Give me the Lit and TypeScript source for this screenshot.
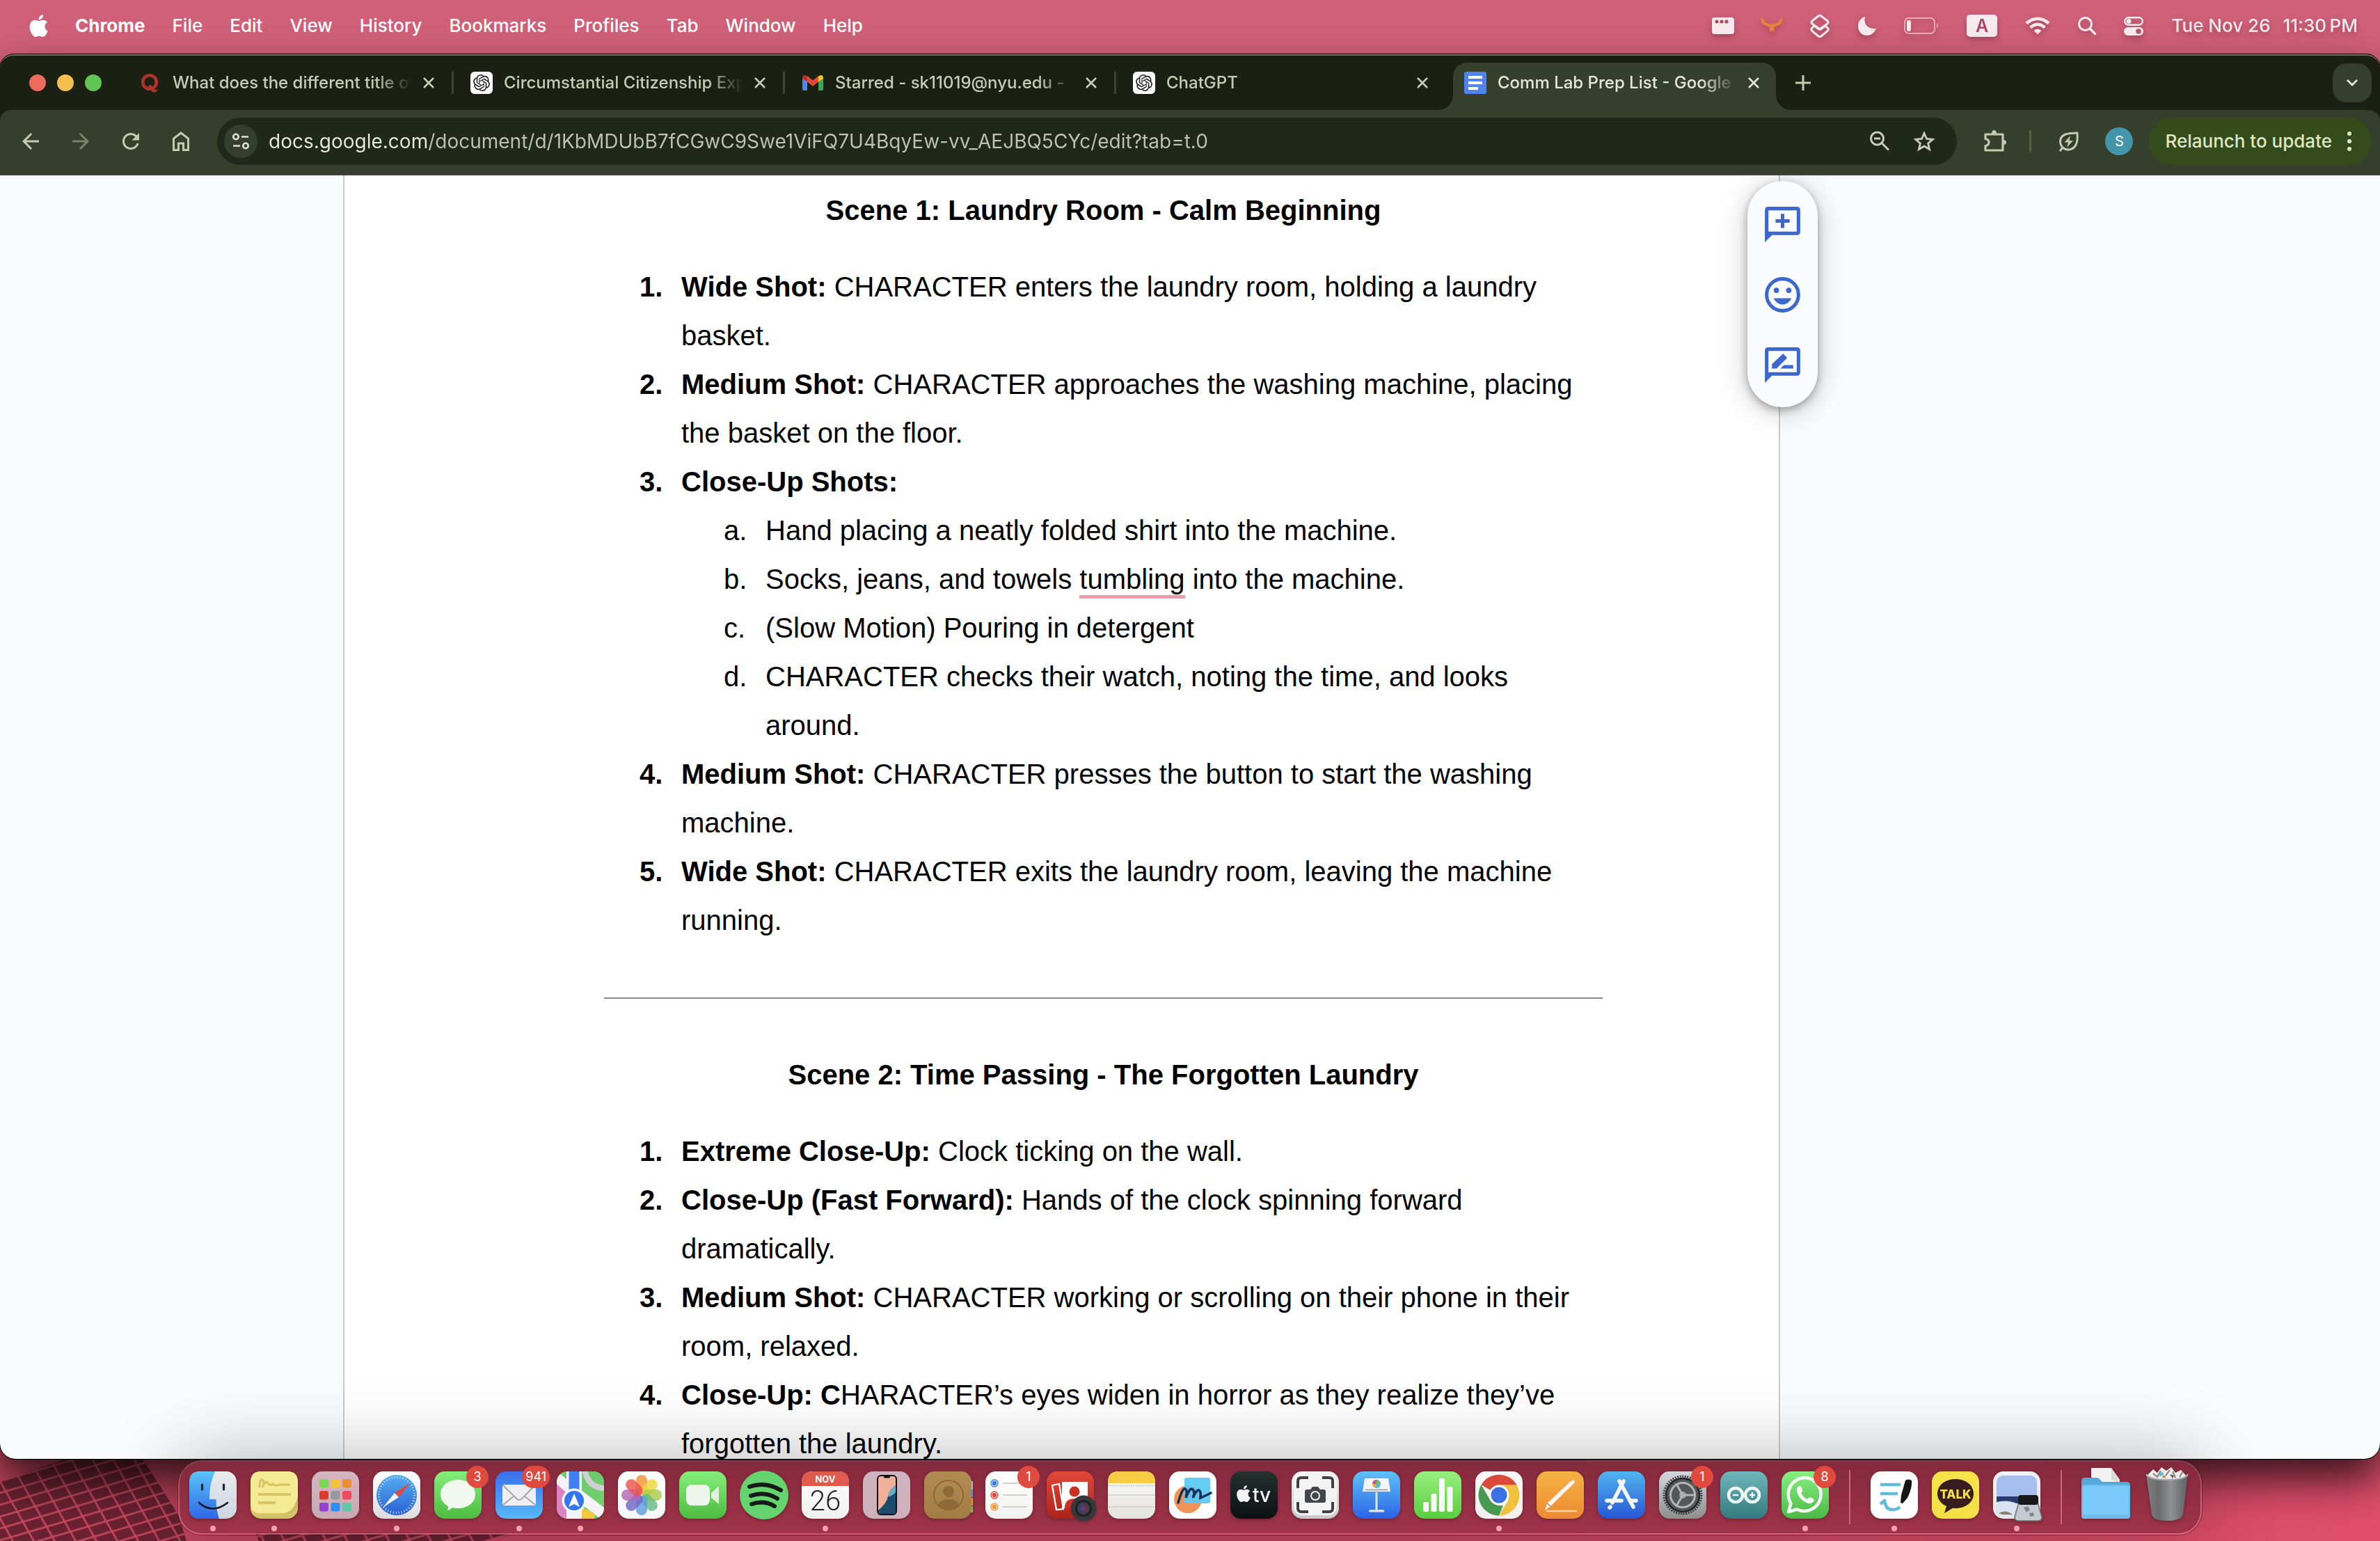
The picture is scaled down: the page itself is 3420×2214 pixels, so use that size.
import { LitElement, html, svg, css, nothing } from "lit";
import { customElement, state } from "lit/decorators.js";
import { classMap } from "lit/directives/class-map.js";

const APPLE =
  "M12.152 6.896c-.948 0-2.415-1.078-3.96-1.04-2.04.027-3.91 1.183-4.961 3.014-2.117 3.675-.546 9.103 1.519 12.09 1.013 1.454 2.208 3.09 3.792 3.039 1.52-.065 2.09-.987 3.935-.987 1.831 0 2.35.987 3.96.948 1.637-.026 2.676-1.48 3.676-2.948 1.156-1.688 1.636-3.325 1.662-3.415-.039-.013-3.182-1.221-3.22-4.857-.026-3.04 2.48-4.494 2.597-4.559-1.429-2.09-3.623-2.324-4.39-2.376-2-.156-3.675 1.09-4.61 1.09zM15.53 3.83c.843-1.012 1.4-2.427 1.245-3.83-1.207.052-2.662.805-3.532 1.818-.78.896-1.454 2.338-1.273 3.714 1.338.104 2.715-.688 3.559-1.701";

const OPENAI =
  "M22.2819 9.8211a5.9847 5.9847 0 0 0-.5157-4.9108 6.0462 6.0462 0 0 0-6.5098-2.9A6.0651 6.0651 0 0 0 4.9807 4.1818a5.9847 5.9847 0 0 0-3.9977 2.9 6.0462 6.0462 0 0 0 .7427 7.0966 5.98 5.98 0 0 0 .511 4.9107 6.051 6.051 0 0 0 6.5146 2.9001A5.9847 5.9847 0 0 0 13.2599 24a6.0557 6.0557 0 0 0 5.7718-4.2058 5.9894 5.9894 0 0 0 3.9977-2.9001 6.0557 6.0557 0 0 0-.7475-7.0729zm-9.022 12.6081a4.4755 4.4755 0 0 1-2.8764-1.0408l.1419-.0804 4.7783-2.7582a.7948.7948 0 0 0 .3927-.6813v-6.7369l2.02 1.1686a.071.071 0 0 1 .038.052v5.5826a4.504 4.504 0 0 1-4.4945 4.4944zm-9.6607-4.1254a4.4708 4.4708 0 0 1-.5346-3.0137l.142.0852 4.783 2.7582a.7712.7712 0 0 0 .7806 0l5.8428-3.3685v2.3324a.0804.0804 0 0 1-.0332.0615L9.74 19.9502a4.4992 4.4992 0 0 1-6.1408-1.6464zM2.3408 7.8956a4.485 4.485 0 0 1 2.3655-1.9728V11.6a.7664.7664 0 0 0 .3879.6765l5.8144 3.3543-2.0201 1.1685a.0757.0757 0 0 1-.071 0l-4.8303-2.7865A4.504 4.504 0 0 1 2.3408 7.872zm16.5963 3.8558L13.1038 8.364 15.1192 7.2a.0757.0757 0 0 1 .071 0l4.8303 2.7913a4.4944 4.4944 0 0 1-.6765 8.1042v-5.6772a.79.79 0 0 0-.407-.667zm2.0107-3.0231l-.142-.0852-4.7735-2.7818a.7759.7759 0 0 0-.7854 0L9.409 9.2297V6.8974a.0662.0662 0 0 1 .0284-.0615l4.8303-2.7866a4.4992 4.4992 0 0 1 6.6802 4.66zM8.3065 12.863l-2.02-1.1638a.0804.0804 0 0 1-.038-.0567V6.0742a4.4992 4.4992 0 0 1 7.3757-3.4537l-.142.0805L8.704 5.459a.7948.7948 0 0 0-.3927.6813zm1.0976-2.3654l2.602-1.4998 2.6069 1.4998v2.9994l-2.5974 1.4997-2.6067-1.4997Z";

const resetStyles = css`
  :host {
    display: block;
    font-family: Inter, "Liberation Sans", sans-serif;
  }
  *,
  *::before,
  *::after {
    box-sizing: border-box;
  }
  button {
    margin: 0;
    padding: 0;
    border: 0;
    background: none;
    color: inherit;
    font: inherit;
    text-align: left;
    cursor: default;
  }
  svg {
    display: block;
    flex: none;
    overflow: visible;
  }
`;

/* ---------- menu bar ---------- */

@customElement("mac-menu-bar")
export class MacMenuBar extends LitElement {
  static styles = [
    resetStyles,
    css`
      .bar {
        display: flex;
        align-items: center;
        justify-content: space-between;
        height: 76px;
        padding: 0 32px 2px 41px;
        background: #cf6077;
        color: #fff;
        font-size: 26px;
        line-height: 32px;
        font-weight: 500;
      }
      .menus,
      .status {
        display: flex;
        align-items: center;
        white-space: nowrap;
      }
      .menus {
        gap: 39px;
      }
      .status {
        gap: 40px;
        color: #f8eaee;
        filter: drop-shadow(0 4px 4px rgba(90, 20, 40, 0.35));
      }
      .app {
        font-weight: 700;
      }
      .clock {
        display: flex;
        gap: 18px;
      }
    `,
  ];

  render() {
    const menus = ["File", "Edit", "View", "History", "Bookmarks", "Profiles", "Tab", "Window", "Help"];
    return html`
      <header class="bar">
        <nav class="menus" aria-label="Application menu">
          <button aria-label="Apple menu">
            <svg width="28" height="32" viewBox="1 0 21 24" fill="#fff"><path d=${APPLE} /></svg>
          </button>
          <button class="app">Chrome</button>
          ${menus.map((m) => html`<button>${m}</button>`)}
        </nav>
        <div class="status">
          <svg width="32" height="24" viewBox="0 0 32 24">
            <rect width="32" height="24" rx="4" fill="#f8eaee" />
            <g fill="#b04a62"><circle cx="7" cy="6" r="2.6" /><circle cx="14" cy="6" r="2.6" /><circle cx="21" cy="6" r="2.6" /></g>
          </svg>
          <svg width="28" height="22" viewBox="0 0 28 22">
            <path d="M-1 1l5 6M29 1l-5 6" stroke="#e8843a" stroke-width="3" />
            <path d="M0 5Q14 17 28 5" fill="none" stroke="#e8843a" stroke-width="4" />
            <circle cx="14" cy="16" r="3.4" fill="#e8843a" />
            <path d="M14 18v4" stroke="#b9664a" stroke-width="2" />
          </svg>
          <svg width="30" height="32" viewBox="0 0 30 32" fill="none" stroke="#f8eaee" stroke-width="3" stroke-linejoin="round">
            <path d="M13 2Q15 .5 17 2L26 9Q28 11 26 13L17 19.500Q15 21 13 19.500L4 13Q2 11 4 9Z" />
            <path d="M7 16L3.500 19.500Q2 21.500 4 23.500L13 31Q15 32.500 17 31L26 23.500Q28 21.500 26.500 19.500L23 16L17 20.500Q15 22 13 20.500Z" />
          </svg>
          <svg width="26" height="27" viewBox="0 0 26 27">
            <path d="M10 0C8 9 12 18 26 17C23 24 18 27 12.500 27C5 27 0 21 0 13.500C0 7 4 1.500 10 0Z" fill="#f8eaee" />
          </svg>
          <svg width="50" height="24" viewBox="0 0 50 24">
            <rect x="1" y="1" width="43" height="22" rx="6" fill="none" stroke="#e9a9b6" stroke-width="2" />
            <rect x="4" y="4" width="6" height="16" rx="3" fill="#f8eaee" />
            <path d="M47 8q4 4 0 8z" fill="#e9a9b6" />
          </svg>
          <svg width="44" height="32" viewBox="0 0 44 32">
            <rect width="44" height="32" rx="5" fill="#f8eaee" />
            <text x="22" y="25" font-size="25" font-weight="600" text-anchor="middle" fill="#a84a60" font-family="Inter, sans-serif">A</text>
          </svg>
          <svg width="36" height="26" viewBox="0 0 36 26" fill="none" stroke="#f8eaee" stroke-width="4.500">
            <path d="M2 9.500Q18 -4 34 9.500" />
            <path d="M7.500 15.500Q18 6.500 28.500 15.500" />
            <path d="M18 25.500L12.500 20Q18 15.500 23.500 20Z" fill="#f8eaee" stroke="none" />
          </svg>
          <svg width="26" height="26" viewBox="0 0 26 26" fill="none" stroke="#f8eaee" stroke-width="3">
            <circle cx="10.500" cy="10.500" r="9" />
            <path d="M17 17L24.500 24.500" stroke-width="3.600" stroke-linecap="round" />
          </svg>
          <svg width="28" height="27" viewBox="0 0 28 27">
            <rect x="1.200" y="1.200" width="25.600" height="10.600" rx="5.300" fill="none" stroke="#f8eaee" stroke-width="2.400" />
            <circle cx="7" cy="6.500" r="3.500" fill="#f8eaee" />
            <rect y="15" width="28" height="12" rx="6" fill="#f8eaee" />
            <circle cx="21" cy="21" r="3.800" fill="#b5556b" />
          </svg>
          <div class="clock"><span>Tue Nov 26</span><span>11:30&#8239;PM</span></div>
        </div>
      </header>
    `;
  }
}

/* ---------- browser window ---------- */

interface Tab {
  title: string;
  icon: unknown;
}

const gptIcon = html`<svg width="32" height="32" viewBox="0 0 32 32">
  <rect width="32" height="32" rx="6" fill="#fff" />
  <path d=${OPENAI} transform="translate(4 4)" fill="#222" />
</svg>`;

const quoraIcon = html`<svg width="32" height="32" viewBox="0 0 32 32">
  <circle cx="15" cy="15" r="9.800" fill="none" stroke="#b0332b" stroke-width="4.600" />
  <path d="M14 19Q18 19 20 23Q22 27 26.500 25.500Q26 29.500 22 29.500Q18 29.500 16.500 26Q15.500 23 13 23Z" fill="#b0332b" />
</svg>`;

const gmailIcon = html`<svg width="32" height="32" viewBox="0 0 32 32">
  <path d="M1 9v16q0 2 2 2h5V13z" fill="#4c86f0" />
  <path d="M31 9v16q0 2-2 2h-5V13z" fill="#3ca55a" />
  <path d="M8 6l8 6.500L24 6v8.500l-8 6.500-8-6.500z" fill="#e4483b" />
  <path d="M1 9q0-4 3.500-4Q6 5 8 6.500v8L1 10z" fill="#bf3027" />
  <path d="M31 9q0-4-3.500-4Q26 5 24 6.500v8L31 10z" fill="#f6c02c" />
</svg>`;

const docsIcon = html`<svg width="32" height="32" viewBox="0 0 32 32">
  <rect width="32" height="32" rx="3" fill="#4f84ee" />
  <path d="M6 6h20v4H6zM6 14h20v4H6zM6 22h14v4H6z" fill="#fff" />
</svg>`;

const closeIcon = html`<svg width="16" height="16" viewBox="0 0 16 16" stroke="currentColor" stroke-width="2.600">
  <path d="M1 1L15 15M15 1L1 15" />
</svg>`;

@customElement("browser-window")
export class BrowserWindow extends LitElement {
  static styles = [
    resetStyles,
    css`
      :host {
        min-height: 0;
      }
      .window {
        display: flex;
        flex-direction: column;
        height: 100%;
        overflow: hidden;
        border-radius: 20px 20px 22px 22px;
        border-top: 2px solid #6a6d60;
        outline: 1px solid #000;
        background: #1b2112;
        box-shadow: 0 30px 60px rgba(0, 0, 0, 0.75);
      }
      .strip {
        display: flex;
        flex: none;
        align-items: stretch;
        height: 78px;
        padding-right: 12px;
        color: #c6cdb4;
        font-size: 24px;
        line-height: 32px;
        font-weight: 500;
      }
      .lights {
        display: flex;
        flex: none;
        align-items: center;
        gap: 16px;
        width: 176px;
        padding-left: 42px;
      }
      .light {
        width: 24px;
        height: 24px;
        border-radius: 50%;
      }
      .close-light {
        background: #ed6a5e;
      }
      .min-light {
        background: #f4bf4f;
      }
      .max-light {
        background: #61c554;
      }
      .tab {
        display: flex;
        flex: 0 1 476px;
        min-width: 0;
        align-items: center;
        gap: 16px;
        padding: 0 28px 0 24px;
        position: relative;
      }
      .tab.divided {
        background: linear-gradient(#3b4530, #3b4530) right center / 3px 32px no-repeat;
      }
      .title {
        flex: 1;
        min-width: 0;
        overflow: hidden;
        white-space: nowrap;
        mask-image: linear-gradient(90deg, #000 calc(100% - 52px), transparent);
      }
      .tab.active {
        color: #e4e8da;
      }
      .tab.active::before {
        content: "";
        position: absolute;
        inset: 10px 4px 0 8px;
        border-radius: 20px 20px 0 0;
        background: #363e2c;
      }
      .tab.active::after {
        content: "";
        position: absolute;
        left: -12px;
        right: -16px;
        bottom: 0;
        height: 20px;
        background:
          radial-gradient(circle at 0 0, transparent 19px, #363e2c 20px) left / 20px 20px no-repeat,
          radial-gradient(circle at 100% 0, transparent 19px, #363e2c 20px) right / 20px 20px no-repeat;
      }
      .tab > * {
        position: relative;
        z-index: 1;
      }
      .new-tab {
        align-self: center;
        margin-left: 24px;
      }
      .spacer {
        flex: 1;
      }
      .tab-menu {
        display: grid;
        place-items: center;
        align-self: center;
        width: 56px;
        height: 56px;
        border-radius: 20px;
        background: #363e2c;
        color: #e4e8da;
      }
      .toolbar {
        display: flex;
        flex: none;
        align-items: center;
        height: 94px;
        padding: 0 12px 2px 26px;
        border-radius: 16px 16px 0 0;
        border-bottom: 2px solid #45443c;
        background: #363e2c;
        color: #c2cab0;
      }
      .nav {
        display: flex;
        gap: 36px;
        margin-right: 34px;
      }
      .dim {
        color: #78806a;
      }
      .omnibox {
        display: flex;
        flex: 1;
        min-width: 0;
        align-items: center;
        height: 68px;
        padding: 0 29px 0 10px;
        border-radius: 34px;
        background: #202819;
        color: #c9cbc0;
      }
      .site {
        display: grid;
        place-items: center;
        width: 48px;
        height: 48px;
        border-radius: 50%;
        background: #363e2c;
        color: #dfe3d4;
      }
      .url {
        flex: 1;
        min-width: 0;
        height: 40px;
        margin-left: 16px;
        padding: 0;
        border: 0;
        outline: 0;
        font: 400 28px/40px Inter, "Liberation Sans", sans-serif;
        color: transparent;
        background: linear-gradient(90deg, #e8ebdf 228px, #bfc2b6 228px);
        background-clip: text;
      }
      .actions {
        display: flex;
        gap: 28px;
      }
      .extras {
        display: flex;
        align-items: center;
        margin-left: 36px;
      }
      .rule {
        width: 3px;
        height: 32px;
        margin: 0 38px 0 32px;
        border-radius: 2px;
        background: #55603f;
      }
      .avatar {
        display: grid;
        place-items: center;
        width: 40px;
        height: 40px;
        margin: 0 22px 0 36px;
        border-radius: 50%;
        background: #4395a9;
        color: #fff;
        font-size: 20px;
        line-height: 24px;
      }
      .relaunch {
        display: flex;
        align-items: center;
        gap: 22px;
        height: 68px;
        padding: 0 29px 0 24px;
        border-radius: 34px;
        background: #344c1c;
        color: #dbe8c6;
        font-size: 26px;
        line-height: 32px;
        font-weight: 500;
        white-space: nowrap;
      }
      shot-document {
        flex: 1;
      }
    `,
  ];

  private tabs: Tab[] = [
    { title: "What does the different title of", icon: quoraIcon },
    { title: "Circumstantial Citizenship Expl", icon: gptIcon },
    { title: "Starred - sk11019@nyu.edu -", icon: gmailIcon },
    { title: "ChatGPT", icon: gptIcon },
    { title: "Comm Lab Prep List - Google", icon: docsIcon },
  ];

  @state() private active = 4;

  render() {
    return html`
      <section class="window">
        <div class="strip">
          <div class="lights">
            <button class="light close-light" aria-label="Close window"></button>
            <button class="light min-light" aria-label="Minimise window"></button>
            <button class="light max-light" aria-label="Zoom window"></button>
          </div>
          ${this.tabs.map(
            (t, i) => html`
              <div
                class=${classMap({
                  tab: true,
                  active: i === this.active,
                  divided: i !== this.active && i !== this.active - 1,
                })}
              >
                ${t.icon}
                <button class="title" @click=${() => (this.active = i)}>${t.title}</button>
                <button aria-label="Close tab">${closeIcon}</button>
              </div>
            `
          )}
          <button class="new-tab" aria-label="New tab">
            <svg width="22" height="22" viewBox="0 0 22 22" stroke="currentColor" stroke-width="3"><path d="M11 0v22M0 11h22" /></svg>
          </button>
          <div class="spacer"></div>
          <button class="tab-menu" aria-label="Search tabs">
            <svg width="16" height="10" viewBox="0 0 16 10" fill="none" stroke="currentColor" stroke-width="2.800"><path d="M1 1l7 7 7-7" /></svg>
          </button>
        </div>

        <div class="toolbar">
          <div class="nav">
            <button aria-label="Back">
              <svg width="36" height="36" viewBox="0 0 24 24" fill="currentColor"><path d="M20 11H7.830l5.590-5.590L12 4l-8 8 8 8 1.410-1.410L7.830 13H20z" /></svg>
            </button>
            <button class="dim" aria-label="Forward">
              <svg width="36" height="36" viewBox="0 0 24 24" fill="currentColor"><path d="M4 11h12.170l-5.590-5.590L12 4l8 8-8 8-1.410-1.410L16.170 13H4z" /></svg>
            </button>
            <button aria-label="Reload">
              <svg width="36" height="36" viewBox="0 0 24 24" fill="currentColor"><path d="M17.650 6.350C16.200 4.900 14.210 4 12 4c-4.420 0-7.990 3.580-7.990 8s3.570 8 7.990 8c3.730 0 6.840-2.550 7.730-6h-2.080c-.82 2.330-3.040 4-5.650 4-3.310 0-6-2.690-6-6s2.690-6 6-6c1.660 0 3.140.69 4.220 1.780L13 11h7V4z" /></svg>
            </button>
            <button aria-label="Home">
              <svg width="36" height="36" viewBox="0 0 36 36" fill="none" stroke="currentColor" stroke-width="3"><path d="M7.500 30.500V14L18 6l10.500 8v16.500H21.500V21h-7v9.500z" /></svg>
            </button>
          </div>
          <div class="omnibox">
            <button class="site" aria-label="View site information">
              <svg width="26" height="26" viewBox="0 0 26 26" fill="none" stroke="currentColor" stroke-width="2.600">
                <circle cx="6" cy="6.500" r="3.700" /><path d="M14 6.500h10M2 19.500h10" /><circle cx="20" cy="19.500" r="3.700" />
              </svg>
            </button>
            <input
              class="url"
              type="text"
              aria-label="Address"
              .value=${"docs.google.com/document/d/1KbMDUbB7fCGwC9Swe1ViFQ7U4BqyEw-vv_AEJBQ5CYc/edit?tab=t.0"}
            />
            <div class="actions">
              <button aria-label="Zoom out">
                <svg width="36" height="36" viewBox="0 0 36 36" fill="none" stroke="currentColor" stroke-width="3">
                  <circle cx="14.500" cy="14" r="9" /><path d="M10 14h9M21 20.500L31 30.500" />
                </svg>
              </button>
              <button aria-label="Bookmark this tab">
                <svg width="36" height="36" viewBox="0 0 36 36" fill="none" stroke="currentColor" stroke-width="2.800">
                  <path d="M18 6.500l3.500 8 8.700.800-6.600 5.700 2 8.500L18 25l-7.600 4.500 2-8.500-6.600-5.700 8.700-.800z" />
                </svg>
              </button>
            </div>
          </div>
          <div class="extras">
            <button aria-label="Extensions">
              <svg width="36" height="36" viewBox="0 0 36 36" fill="none" stroke="currentColor" stroke-width="3.200" stroke-linejoin="round">
                <path d="M5 8h25v23H5v-6.500q5-1 5-5t-5-5z" />
                <path d="M14 7q0-5 3.500-5T21 7zM31 16q4 0 4 3.500T31 23z" fill="currentColor" stroke="none" />
              </svg>
            </button>
            <div class="rule"></div>
            <button aria-label="Energy saver">
              <svg width="32" height="32" viewBox="0 0 32 32" fill="none" stroke="currentColor" stroke-width="3">
                <path d="M7 25C1 18 3 9 11 6Q17 4 28 4Q29 15 26 21C22 29 13 30 7 25L3 30" />
                <path d="M18 8L9.500 17.500h5.500L13 25l9-10h-5.500z" fill="currentColor" stroke="none" />
              </svg>
            </button>
            <button class="avatar" aria-label="Profile">S</button>
            <button class="relaunch">
              Relaunch to update
              <svg width="6" height="28" viewBox="0 0 6 28" fill="currentColor"><circle cx="3" cy="3" r="3" /><circle cx="3" cy="14" r="3" /><circle cx="3" cy="25" r="3" /></svg>
            </button>
          </div>
        </div>

        <shot-document></shot-document>
      </section>
    `;
  }
}

/* ---------- document ---------- */

interface Shot {
  label?: string;
  text?: unknown;
  steps?: unknown[];
}

interface Scene {
  title: string;
  shots: Shot[];
}

const scenes: Scene[] = [
  {
    title: "Scene 1: Laundry Room - Calm Beginning",
    shots: [
      { label: "Wide Shot:", text: "CHARACTER enters the laundry room, holding a laundry basket." },
      { label: "Medium Shot:", text: "CHARACTER approaches the washing machine, placing the basket on the floor." },
      {
        label: "Close-Up Shots:",
        steps: [
          "Hand placing a neatly folded shirt into the machine.",
          html`Socks, jeans, and towels <span class="flagged">tumbling</span> into the machine.`,
          "(Slow Motion) Pouring in detergent",
          "CHARACTER checks their watch, noting the time, and looks around.",
        ],
      },
      { label: "Medium Shot:", text: "CHARACTER presses the button to start the washing machine." },
      { label: "Wide Shot:", text: "CHARACTER exits the laundry room, leaving the machine running." },
    ],
  },
  {
    title: "Scene 2: Time Passing - The Forgotten Laundry",
    shots: [
      { label: "Extreme Close-Up:", text: "Clock ticking on the wall." },
      { label: "Close-Up (Fast Forward):", text: "Hands of the clock spinning forward dramatically." },
      { label: "Medium Shot:", text: "CHARACTER working or scrolling on their phone in their room, relaxed." },
      { label: "Close-Up:", text: html`<b>C</b>HARACTER’s eyes widen in horror as they realize they’ve forgotten the laundry.` },
    ],
  },
];

@customElement("shot-document")
export class ShotDocument extends LitElement {
  static styles = [
    resetStyles,
    css`
      :host {
        min-height: 0;
        overflow: hidden;
        background: #f9fbfd;
        color: #000;
        font-family: "Liberation Sans", Arial, sans-serif;
      }
      .canvas {
        display: grid;
        grid-template-columns: 493fr 2065fr 862fr;
        height: 100%;
      }
      .page {
        grid-column: 2;
        position: relative;
        min-height: 100%;
        padding: 15px 253px 0 373px;
        border: solid #c9cbce;
        border-width: 0 2px;
        background: #fff;
        font-size: 40px;
        line-height: 70px;
      }
      h2 {
        margin: 0 0 40px;
        font: inherit;
        font-weight: 700;
        text-align: center;
      }
      hr {
        height: 2px;
        margin: 76px 0 74px;
        border: 0;
        background: #8a8a8a;
      }
      ol {
        margin: 0;
        padding: 0;
        list-style: none;
      }
      .shots {
        padding-left: 51px;
      }
      .steps {
        padding-left: 121px;
      }
      .row {
        display: grid;
        grid-template-columns: 60px minmax(0, 1fr);
      }
      .flagged {
        background: linear-gradient(#f09aaa, #f09aaa) left bottom / 100% 5px no-repeat;
        padding-bottom: 6px;
      }
      .rail {
        position: absolute;
        top: 8px;
        right: -56px;
        display: flex;
        flex-direction: column;
        align-items: center;
        gap: 40px;
        padding: 32px 20px 30px;
        border-radius: 51px;
        background: #f9fbfe;
        color: #3b67cf;
        box-shadow: 0 4px 12px rgba(0, 0, 0, 0.3), 0 6px 40px rgba(0, 0, 0, 0.22);
      }
    `,
  ];

  private scene(scene: Scene) {
    return html`
      <h2>${scene.title}</h2>
      <ol class="shots">
        ${scene.shots.map(
          (shot, i) => html`
            <li>
              <div class="row"><b>${i + 1}.</b><span><b>${shot.label}</b> ${shot.text ?? nothing}</span></div>
              ${shot.steps
                ? html`<ol class="steps">
                    ${shot.steps.map((step, j) => html`<li class="row"><span>${"abcdefgh"[j]}.</span><span>${step}</span></li>`)}
                  </ol>`
                : nothing}
            </li>
          `
        )}
      </ol>
    `;
  }

  render() {
    return html`
      <div class="canvas">
        <main class="page">
          ${this.scene(scenes[0])}
          <hr />
          ${this.scene(scenes[1])}
          <div class="rail">
            <button aria-label="Add comment">
              <svg width="61" height="61" viewBox="0 0 24 24" fill="currentColor">
                <path fill-rule="evenodd" d="M20 2H4Q2 2 2 4v18l4-4h14q2 0 2-2V4q0-2-2-2zM4 4h16v12H4z" />
                <path d="M11 6h2v3h3v2h-3v3h-2v-3H8V9h3z" />
              </svg>
            </button>
            <button aria-label="Add emoji reaction">
              <svg width="61" height="61" viewBox="0 0 24 24" fill="currentColor">
                <circle cx="12" cy="12" r="9" fill="none" stroke="currentColor" stroke-width="2" />
                <circle cx="8.500" cy="9.500" r="1.500" /><circle cx="15.500" cy="9.500" r="1.500" />
                <path d="M7 14h10c-.8 2-2.700 3.500-5 3.500S7.800 16 7 14z" />
              </svg>
            </button>
            <button aria-label="Suggest edits">
              <svg width="61" height="61" viewBox="0 0 24 24" fill="currentColor">
                <path fill-rule="evenodd" d="M20 2H4Q2 2 2 4v18l4-4h14q2 0 2-2V4q0-2-2-2zM4 4h16v12H4z" />
                <path d="M6 14v-2.500l6.300-6 2.300 2.500-6 6zM10.700 14l2.100-2H18v2z" />
              </svg>
            </button>
          </div>
        </main>
      </div>
    `;
  }
}

/* ---------- dock ---------- */

const tile = (id: string, top: string, bottom: string) => svg`
  <defs><linearGradient id=${id} x1="0" y1="0" x2="0" y2="1">
    <stop offset="0" stop-color=${top} /><stop offset="1" stop-color=${bottom} />
  </linearGradient></defs>
  <rect width="68" height="68" rx="15" fill=${`url(#${id})`} />`;

const art: Record<string, unknown> = {
  Finder: svg`${tile("fd", "#e9eaee", "#ccd5e1")}
    <defs><linearGradient id="fb" x1="0" y1="0" x2="0" y2="1"><stop offset="0" stop-color="#5ac4f8" /><stop offset="1" stop-color="#2f66e6" /></linearGradient></defs>
    <path d="M15 0H37C31 14 29 26 29 40H38.500C38.500 50 40 60 43 68H15Q0 68 0 53V15Q0 0 15 0Z" fill="url(#fb)" />
    <path d="M18.500 19v7M49.500 19v7" stroke="#1b2430" stroke-width="3.200" stroke-linecap="round" />
    <path d="M14 45Q33 62 55 45" fill="none" stroke="#14181f" stroke-width="2.600" stroke-linecap="round" />`,
  Stickies: svg`${tile("sk", "#f0e68e", "#d3c166")}
    <path d="M15 0H53Q68 0 68 15V36Q64 62 46 60H15Q0 60 0 46V15Q0 0 15 0Z" fill="#f6eb95" />
    <path d="M68 36Q62 60 46 60Q60 64 68 50Z" fill="#cdbb60" />
    <path d="M13 23Q13 10 17 12T17 23Q22 12 25 17T31 18Q36 22 42 19H57" fill="none" stroke="#d8c565" stroke-width="3" />
    <path d="M11 33H58M11 45H36" stroke="#d8c565" stroke-width="4" />`,
  Launchpad: svg`${tile("lp", "#d3b6c0", "#c9a8b4")}
    ${["#79d94d", "#f5c236", "#eb8e34", "#dd3a2c", "#97989d", "#ee4b61", "#9440d2", "#2f8ef4", "#5fc7a2"].map(
      (c, i) => svg`<rect x=${11 + (i % 3) * 16.500} y=${11 + Math.floor(i / 3) * 17} width="13" height="12.500" rx="3" fill=${c} />`
    )}`,
  Safari: svg`${tile("sf", "#ffffff", "#dcdcde")}
    <defs><linearGradient id="sfb" x1="0" y1="0" x2="0" y2="1"><stop offset="0" stop-color="#54aef0" /><stop offset="1" stop-color="#2b62d4" /></linearGradient></defs>
    <circle cx="34" cy="34" r="29" fill="url(#sfb)" />
    <circle cx="34" cy="34" r="25.500" fill="none" stroke="#d5e6fa" stroke-width="3.400" stroke-dasharray="1 3" />
    <path d="M54 16L31 31L37 37Z" fill="#e2483d" /><path d="M14 52L31 31L37 37Z" fill="#f4f4f6" />`,
  Messages: svg`${tile("ms", "#84ee7a", "#4dbd40")}
    <path d="M34 12C48 12 59 21 59 33S48 53 34 53Q30 53 26 52Q23 55 18 56Q21 53 20 50C13 46 9 40 9 33C9 21 20 12 34 12Z" fill="#f1f8ef" />`,
  Mail: svg`${tile("ml", "#3a6fec", "#58b8f7")}
    <rect x="10" y="19" width="48" height="30" rx="3" fill="#efeff1" />
    <path d="M11 20L30 39Q34 43 38 39L57 20M11 48L27 35M57 48L41 35" fill="none" stroke="#a5a7ab" stroke-width="1.800" />`,
  Maps: svg`${tile("mp", "#6ecb68", "#78cf70")}
    <clipPath id="mpc"><rect width="68" height="68" rx="15" /></clipPath>
    <g clip-path="url(#mpc)">
      <path d="M0 10L68 62" stroke="#f4f4f8" stroke-width="16" />
      <path d="M0 18L24 40V68H0Z" fill="#da84c3" />
      <path d="M36 52L54 60V68H36Z" fill="#f5c93f" />
      <path d="M40 -4Q44 26 74 24" fill="none" stroke="#cfcfd6" stroke-width="8" />
      <path d="M25 0V68" stroke="#f4f4f8" stroke-width="22" />
      <path d="M25 0V30" stroke="#3f7ff2" stroke-width="15" />
    </g>
    <circle cx="25" cy="42" r="17.500" fill="#f7f8fb" /><circle cx="25" cy="42" r="14" fill="#3577f0" />
    <path d="M25 32L33 51L25 47L17 51Z" fill="#fff" />`,
  Photos: svg`${tile("ph", "#ffffff", "#f6f6f7")}
    ${["#f0913b", "#efd53c", "#a8cd4b", "#67b985", "#5d9fe0", "#7068c6", "#b268b2", "#e8534f"].map(
      (c, i) => svg`<rect x="26" y="5" width="16" height="28" rx="8" fill=${c} opacity="0.820" transform=${`rotate(${i * 45} 34 34)`} />`
    )}`,
  FaceTime: svg`${tile("ft", "#84ee7a", "#4dbd40")}
    <rect x="10" y="19" width="34" height="30" rx="8" fill="#eef6ec" /><path d="M46 31L57 21V47L46 38Z" fill="#e2f0df" />`,
  Spotify: svg`<circle cx="34" cy="34" r="35" fill="#65d36e" />
    <path d="M13 22Q36 14 58 27M15 35Q35 28 53 39M16 47Q34 41 49 50" fill="none" stroke="#141a15" stroke-width="6" stroke-linecap="round" />`,
  Calendar: svg`${tile("cl", "#ffffff", "#f0f0f0")}
    <path d="M15 0H53Q68 0 68 15V21H0V15Q0 0 15 0Z" fill="#e05a4e" />
    <text x="34" y="16" font-size="13" font-weight="700" text-anchor="middle" fill="#fff" font-family="Inter, sans-serif">NOV</text>
    <text x="34" y="56" font-size="40" font-weight="300" text-anchor="middle" fill="#222" font-family="Roboto, sans-serif">26</text>`,
  "iPhone Mirroring": svg`${tile("im", "#cfb3be", "#cdb0ba")}
    <rect x="20" y="5" width="29" height="58" rx="6" fill="#111" /><rect x="22" y="7" width="25" height="54" rx="4" fill="#f0b09a" />
    <path d="M47 20Q38 26 36 36T22 56V57Q22 61 26 61H43Q47 61 47 57Z" fill="#1d4b6b" />
    <path d="M47 20Q38 26 36 36Q42 36 47 30Z" fill="#62aecb" /><rect x="30" y="6.500" width="9" height="3" rx="1.500" fill="#111" />`,
  Contacts: svg`<path d="M66 14h4v12h-4z" fill="#b7b7b7" /><path d="M66 26h4v11h-4z" fill="#4c94d8" /><path d="M66 38h4v11h-4z" fill="#e58f38" /><path d="M66 50h4v9h-4z" fill="#66c45e" />
    ${tile("ct", "#b18b52", "#a27c44")}
    <g fill="none" stroke="#86652f" stroke-width="1.600"><circle cx="35" cy="34" r="21" /></g>
    <circle cx="35" cy="29" r="8" fill="#8d6b38" /><path d="M20 48Q24 40 35 40T50 48Q44 55 35 55T20 48Z" fill="#8d6b38" />`,
  Reminders: svg`${tile("rm", "#ffffff", "#f1f1ef")}
    ${["#3478f6", "#e0473c", "#ee9a38"].map(
      (c, i) => svg`<circle cx="13" cy=${17 + i * 17} r="5" fill="none" stroke=${c} stroke-width="1.400" /><circle cx="13" cy=${17 + i * 17} r="3.200" fill=${c} /><path d=${`M25 ${17 + i * 17}H60`} stroke="#c3c3c5" stroke-width="1.600" />`
    )}`,
  "Photo Booth": svg`${tile("pb", "#e2473a", "#aa2418")}
    <path d="M8 20L18 18L24 54L14 55Z" fill="none" stroke="#fff" stroke-width="2.200" /><rect x="22" y="15" width="37" height="38" fill="#fff" />
    <circle cx="40" cy="29" r="7.500" fill="#c93126" /><path d="M26 53Q26 39 40 39T52 53Z" fill="#c93126" />
    <circle cx="53" cy="53" r="18.500" fill="#37383c" /><circle cx="53" cy="53" r="12" fill="#1f2024" /><circle cx="53" cy="53" r="9" fill="#3f404a" /><circle cx="53" cy="53" r="5" fill="#4e3a86" /><path d="M53 48a5 5 0 0 1 0 10z" fill="#7b2c45" />`,
  Notes: svg`${tile("nt", "#fbfbf9", "#e3e2dc")}
    <path d="M15 0H53Q68 0 68 15V17H0V15Q0 0 15 0Z" fill="#f7cd46" /><path d="M0 20.500H68" stroke="#b9b7b0" stroke-width="1.500" stroke-dasharray="1.500 1.500" />
    <path d="M0 34H68M0 51H68" stroke="#cfcecb" stroke-width="1.500" />`,
  Freeform: svg`${tile("ff", "#ffffff", "#ffffff")}
    <circle cx="27" cy="40" r="20" fill="#f0955a" /><rect x="22" y="9" width="37" height="37" rx="3" fill="#5ac9f4" opacity="0.930" />
    <path d="M13 45Q19 23 23 25T24 38Q30 22 34 26T34 38Q40 25 43 27T45 38Q50 36 60 31" fill="none" stroke="#15325c" stroke-width="3.600" stroke-linecap="round" />`,
  TV: svg`${tile("tv", "#26322f", "#0b0f10")}
    <path d=${APPLE} transform="translate(7 20)" fill="#f4f4f4" />
    <text x="45" y="44" font-size="28" font-weight="500" text-anchor="middle" fill="#f4f4f4" font-family="Inter, sans-serif">tv</text>`,
  Screenshot: svg`${tile("ss", "#f4f4f4", "#c9c9cb")}<rect x="3" y="3" width="62" height="60" rx="12" fill="#f3f3f4" />
    <path d="M9 24V14Q9 9 14 9H24M44 9H54Q59 9 59 14V24M59 44V53Q59 58 54 58H44M24 58H14Q9 58 9 53V44" fill="none" stroke="#404144" stroke-width="4" />
    <path d="M22 26H27L30 22H38L41 26H46Q49 26 49 29V42Q49 45 46 45H22Q19 45 19 42V29Q19 26 22 26Z" fill="#454649" /><circle cx="34" cy="35" r="6" fill="none" stroke="#f3f3f4" stroke-width="2" />`,
  Keynote: svg`${tile("kn", "#5ec2f9", "#2b63e5")}
    <path d="M17 10H51L54 29H14Z" fill="#f4f5f8" /><path d="M18 26.500H50" stroke="#8a98a8" stroke-width="1.500" />
    <circle cx="34" cy="18" r="6" fill="#4fb7ef" /><path d="M34 18V12A6 6 0 0 1 40 18Z" fill="#6ac565" /><path d="M34 18V12A6 6 0 0 0 28 18Z" fill="#dc4d8b" /><path d="M34 18H28A6 6 0 0 0 32 23.500Z" fill="#f2a73b" />
    <path d="M34 30V56" stroke="#dfe6ee" stroke-width="3" /><rect x="23" y="55" width="22" height="3.500" rx="1.500" fill="#dfe3ea" />`,
  Numbers: svg`${tile("nm", "#98f07e", "#58cd3f")}
    <g fill="#f6fbf5"><rect x="13" y="44" width="8" height="14" rx="2" /><rect x="24.500" y="32" width="8" height="26" rx="2" /><rect x="36" y="10" width="8" height="48" rx="2" /><rect x="47.500" y="22" width="8" height="36" rx="2" /></g>`,
  Chrome: svg`${tile("cr", "#fbf7f8", "#f4eeee")}
    <path d="M34 34L8.500 19.300A29.500 29.500 0 0 1 59.500 19.300Z" fill="#d94a38" /><path d="M34 19.300H59.500A29.500 29.500 0 0 1 34 63.500L47 42Z" fill="#f0c03f" />
    <path d="M8.500 19.300L21.500 41.500Q27 50 40 49L34 63.500A29.500 29.500 0 0 1 8.500 19.300Z" fill="#489a50" />
    <circle cx="34" cy="34" r="14.500" fill="#fff" /><circle cx="34" cy="34" r="11.500" fill="#3a72e4" />`,
  Pages: svg`${tile("pg", "#f4b344", "#ed8a33")}
    <path d="M12 56L15 46L49 14Q55 10 55 16L20 50Z" fill="#f8f4ef" /><path d="M15 46L20 50" stroke="#8b8b8b" stroke-width="1.500" /><path d="M14 57H58" stroke="#f9cf9b" stroke-width="2.500" />`,
  "App Store": svg`${tile("as", "#52b5f1", "#2756d4")}
    <g stroke="#f5f7fb" stroke-width="5.500" stroke-linecap="round"><path d="M37 14L21 45M31 14L51 51M13 42H34M46 42H55M18 51L17 52" /></g>`,
  "System Settings": svg`${tile("sy", "#d0d8de", "#8e8e8c")}
    <circle cx="34" cy="34" r="27" fill="none" stroke="#3a3b3d" stroke-width="3" stroke-dasharray="2 1.600" /><circle cx="34" cy="34" r="24" fill="#545659" stroke="#242527" stroke-width="2.500" />
    <circle cx="34" cy="34" r="17.500" fill="none" stroke="#b2b5b8" stroke-width="3" /><circle cx="34" cy="34" r="5" fill="#9ea1a4" />
    <path d="M34 34H53M34 34L24.500 17.500M34 34L24.500 50.500" stroke="#b2b5b8" stroke-width="3" />`,
  Arduino: svg`${tile("ar", "#70b7bb", "#33797f")}
    <g fill="none" stroke="#edf5f5" stroke-width="4.500"><circle cx="22" cy="34" r="10" /><circle cx="46" cy="34" r="10" /></g><path d="M18 34H26M42 34H50M46 30V38" stroke="#edf5f5" stroke-width="2.400" />`,
  WhatsApp: svg`${tile("wa", "#86f080", "#4cb947")}
    <path d="M34 9A24 24 0 1 1 22 54.500L10 58L13.500 46A24 24 0 0 1 34 9Z" fill="none" stroke="#f5faf4" stroke-width="4.500" stroke-linejoin="round" />
    <path d="M25 21Q21 23 22 29Q25 41 38 46Q44 47 47 42Q47 39 41 37Q39 37 37 40Q31 37 28 31Q31 29 30 26Q28 20 25 21Z" fill="#f5faf4" />`,
  GoodNotes: svg`${tile("gn", "#ffffff", "#ffffff")}
    <path d="M14 19H43M14 32H39" stroke="#62bad8" stroke-width="4.500" /><path d="M14 47L20 42Q22 56 32 55Q38 55 42 51" fill="none" stroke="#62bad8" stroke-width="4.500" stroke-linejoin="round" />
    <path d="M50 13Q54 10 59 13Q60 24 53 38L46 46L43 45L44 34Z" fill="#151515" />`,
  KakaoTalk: svg`${tile("kk", "#f7e34b", "#f4df46")}
    <path d="M34 11C49 11 60 20 60 32S49 53 34 53L30 52.700L18 60L21 50C13 46 8 40 8 32C8 20 19 11 34 11Z" fill="#371d1e" />
    <text x="34" y="39" font-size="17" font-weight="800" text-anchor="middle" fill="#f6e14a" font-family="Inter, sans-serif">TALK</text>`,
  Preview: svg`${tile("pv", "#f1f1f3", "#e6e6e8")}
    <rect x="5" y="6" width="58" height="57" rx="9" fill="#a6bfee" /><path d="M5 36H63V46H5Z" fill="#2b3a72" /><path d="M5 44Q20 40 34 46T63 44V54Q63 63 54 63H14Q5 63 5 54Z" fill="#d9e3f2" /><path d="M8 60Q18 54 28 62H14Z" fill="#8d7d66" />
    <path d="M37 44H64L70 66Q70 71 64 71H37Q31 71 31 66Z" fill="#c4cad0" stroke="#6c7075" stroke-width="1.500" /><path d="M44 52l6-2 3 5-5 4zM52 60l6-1 1 5-6 1z" fill="#7b8896" /><rect x="36" y="34" width="29" height="14" rx="4" fill="#16171a" />`,
  Downloads: svg`<path d="M13 -5H42L54 12V24H13Z" fill="#f2f2f2" /><path d="M42 -5V12L54 16Z" fill="#dadada" />
    <path d="M-1 14Q-1 9 4 9H20Q24 9 26 12L29 15H64Q69 15 69 20V30H-1Z" fill="#57a8da" /><rect x="-1" y="19" width="70" height="49" rx="4" fill="#6cbcee" /><rect x="1" y="21" width="66" height="41" rx="3" fill="#7acbfa" />`,
  Trash: svg`<path d="M5 6L14 -3L20 2L26 -6L33 -1L40 -6L46 2L54 -2L62 7L56 12H10Z" fill="#ecebe8" /><path d="M14 3l6 5 5-9M32 6l6-8M46 9l-4-9M52 8l4-7" stroke="#85827d" stroke-width="2" fill="none" /><path d="M22 3l6-2 1 4-5 2z" fill="#5cb5d8" /><path d="M26 8l5-3 1 5z" fill="#df7a3a" /><path d="M38 4l6 2-2 4z" fill="#55524d" />
    <defs><linearGradient id="tr"><stop offset="0" stop-color="#7d7f80" /><stop offset="0.300" stop-color="#6a6c6d" /><stop offset="0.600" stop-color="#8e9091" /><stop offset="1" stop-color="#5d5f60" /></linearGradient></defs>
    <path d="M4 4Q8 12 34 12T64 4L57 62Q54 71 34 71T12 62Z" fill="url(#tr)" /><path d="M4 4Q8 12 34 12T64 4" fill="none" stroke="#a8abad" stroke-width="2" />`,
};

interface DockItem {
  name: string;
  badge?: string;
  running?: boolean;
}

const apps: DockItem[] = [
  { name: "Finder", running: true },
  { name: "Stickies", running: true },
  { name: "Launchpad" },
  { name: "Safari", running: true },
  { name: "Messages", badge: "3" },
  { name: "Mail", badge: "941", running: true },
  { name: "Maps", running: true },
  { name: "Photos" },
  { name: "FaceTime" },
  { name: "Spotify" },
  { name: "Calendar", running: true },
  { name: "iPhone Mirroring" },
  { name: "Contacts" },
  { name: "Reminders", badge: "1" },
  { name: "Photo Booth" },
  { name: "Notes" },
  { name: "Freeform" },
  { name: "TV" },
  { name: "Screenshot" },
  { name: "Keynote" },
  { name: "Numbers" },
  { name: "Chrome", running: true },
  { name: "Pages" },
  { name: "App Store" },
  { name: "System Settings", badge: "1" },
  { name: "Arduino" },
  { name: "WhatsApp", badge: "8", running: true },
];
const recents: DockItem[] = [
  { name: "GoodNotes", running: true },
  { name: "KakaoTalk" },
  { name: "Preview", running: true },
];
const places: DockItem[] = [{ name: "Downloads" }, { name: "Trash" }];

@customElement("mac-dock")
export class MacDock extends LitElement {
  static styles = [
    resetStyles,
    css`
      .dock {
        display: flex;
        gap: 20px;
        height: 107px;
        padding: 14px 14px 0;
        border: 2px solid rgba(235, 170, 190, 0.28);
        border-radius: 34px;
        background: linear-gradient(#84293c, #9f3349);
        background-clip: padding-box;
        box-shadow: 0 0 0 1px rgba(60, 10, 25, 0.5), 0 0 110px rgba(0, 0, 0, 0.3);
      }
      .app {
        position: relative;
        flex: none;
        width: 68px;
        height: 68px;
      }
      .app svg {
        filter: drop-shadow(0 2px 2px rgba(0, 0, 0, 0.25));
      }
      .running::after {
        content: "";
        position: absolute;
        left: 30px;
        top: 78px;
        width: 8px;
        height: 8px;
        border-radius: 50%;
        background: #ff9fb5;
      }
      .badge {
        position: absolute;
        top: -8px;
        right: -10px;
        min-width: 32px;
        height: 32px;
        padding: 0 5px;
        border-radius: 16px;
        background: #e0493d;
        color: #fff;
        font-size: 18px;
        line-height: 32px;
        text-align: center;
      }
      .sep {
        flex: none;
        width: 2px;
        height: 78px;
        margin: -2px 9px 0;
        background: #d0647c;
      }
    `,
  ];

  private item(app: DockItem) {
    return html`
      <button class=${classMap({ app: true, running: !!app.running })} aria-label=${app.name}>
        <svg width="68" height="68" viewBox="0 0 68 68">${art[app.name]}</svg>
        ${app.badge ? html`<span class="badge">${app.badge}</span>` : nothing}
      </button>
    `;
  }

  render() {
    return html`
      <nav class="dock" aria-label="Dock">
        ${apps.map((a) => this.item(a))}
        <div class="sep"></div>
        ${recents.map((a) => this.item(a))}
        <div class="sep"></div>
        ${places.map((a) => this.item(a))}
      </nav>
    `;
  }
}

/* ---------- desktop ---------- */

@customElement("app-root")
export class AppRoot extends LitElement {
  static styles = [
    resetStyles,
    css`
      .desktop {
        position: relative;
        display: flex;
        flex-direction: column;
        height: 100vh;
        overflow: hidden;
        background: linear-gradient(90deg, #c6455f, #c6465f 60%, #e04e6b) bottom / 100% 130px no-repeat, #cf6077;
      }
      .wallpaper {
        position: absolute;
        left: 0;
        bottom: 0;
      }
      browser-window {
        position: relative;
        flex: 1;
        margin-top: 2px;
      }
      .dock-row {
        position: relative;
        display: flex;
        flex: none;
        justify-content: center;
        height: 118px;
        padding-top: 2px;
      }
    `,
  ];

  render() {
    return html`
      <div class="desktop">
        <svg class="wallpaper" width="760" height="118" viewBox="0 0 760 118" aria-hidden="true">
          <defs>
            <pattern id="grid" width="10" height="10" patternUnits="userSpaceOnUse" patternTransform="matrix(2.580 -0.750 0.825 1.460 0 32)">
              <rect width="10" height="10" fill="#c8475f" />
              <rect x="0.500" y="0.800" width="9" height="8.400" fill="#6a2232" />
            </pattern>
          </defs>
          <path d="M0 32L96 0H205L256 80L268 118H0Z" fill="url(#grid)" />
          <path d="M368 108H740L700 118H372Z" fill="url(#grid)" />
        </svg>
        <mac-menu-bar></mac-menu-bar>
        <browser-window></browser-window>
        <div class="dock-row"><mac-dock></mac-dock></div>
      </div>
    `;
  }
}
